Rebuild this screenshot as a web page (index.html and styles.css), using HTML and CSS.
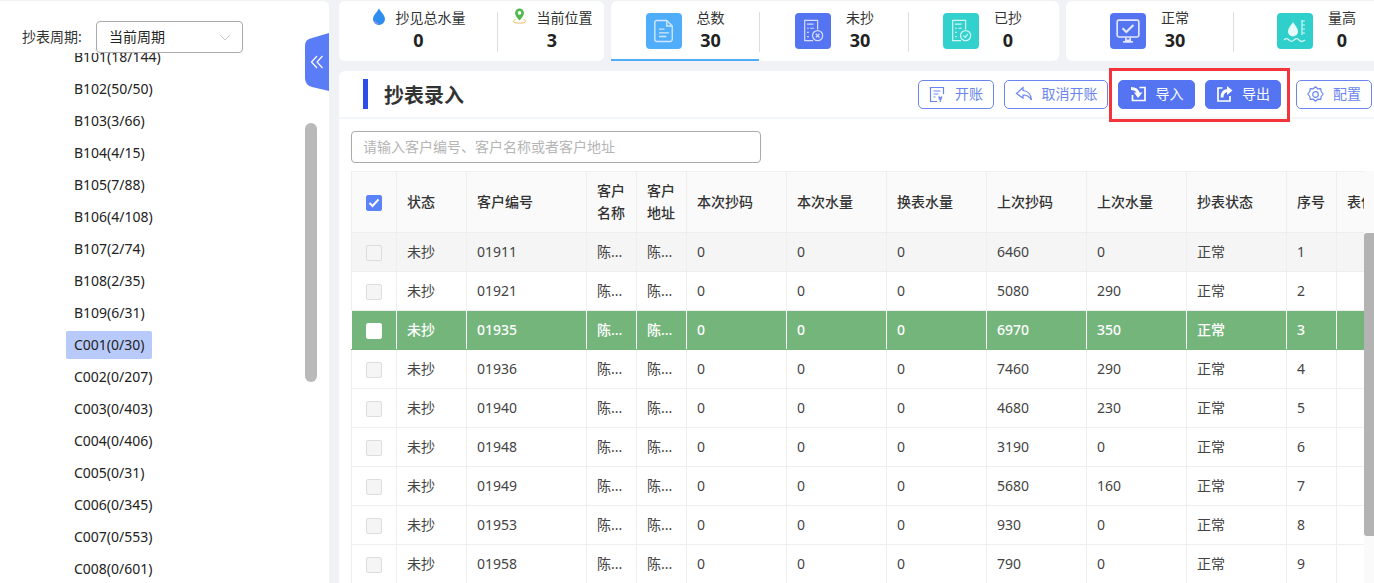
FILE: index.html
```html
<!DOCTYPE html>
<html lang="zh-CN">
<head>
    <meta charset="UTF-8">
    <meta name="viewport" content="width=device-width, initial-scale=1.0">
    <title>抄表录入</title>
    <link rel="stylesheet" href="styles.css">
</head>
<body>
    <aside class="sidebar">
        <div class="period">
            <span class="period-label">抄表周期:</span>
            <div class="period-select">
                <span class="period-value">当前周期</span>
                <svg class="chevron" width="12" height="7" viewBox="0 0 12 7"><path d="M1 1l5 5 5-5" fill="none" stroke="#c4c7cc"/></svg>
            </div>
        </div>
        <div class="tree">
            <ul class="tree-list">
                <li><span class="tree-item">B101(18/144)</span></li>
                <li><span class="tree-item">B102(50/50)</span></li>
                <li><span class="tree-item">B103(3/66)</span></li>
                <li><span class="tree-item">B104(4/15)</span></li>
                <li><span class="tree-item">B105(7/88)</span></li>
                <li><span class="tree-item">B106(4/108)</span></li>
                <li><span class="tree-item">B107(2/74)</span></li>
                <li><span class="tree-item">B108(2/35)</span></li>
                <li><span class="tree-item">B109(6/31)</span></li>
                <li><span class="tree-item active">C001(0/30)</span></li>
                <li><span class="tree-item">C002(0/207)</span></li>
                <li><span class="tree-item">C003(0/403)</span></li>
                <li><span class="tree-item">C004(0/406)</span></li>
                <li><span class="tree-item">C005(0/31)</span></li>
                <li><span class="tree-item">C006(0/345)</span></li>
                <li><span class="tree-item">C007(0/553)</span></li>
                <li><span class="tree-item">C008(0/601)</span></li>
            </ul>
        </div>
        <div class="tree-scroll"></div>
        <div class="collapse">
            <svg width="14" height="14" viewBox="0 0 14 14"><path d="M7 1L1.500 7 7 13M12.500 1L7 7l5.500 6" fill="none" stroke="#fff" stroke-width="1.200"/></svg>
        </div>
    </aside>

    <main class="main">
        <div class="stats">
            <div class="card card-a">
                <div class="mini mini-water">
                    <div class="mini-label">
                        <svg width="14" height="17" viewBox="0 0 14 17"><path d="M7 .5C5 4 1 7.500 1 11a6 6 0 0 0 12 0C13 7.500 9 4 7 .5z" fill="#2f8df0"/><path d="M2.500 13a5.500 5.500 0 0 0 4 3" fill="none" stroke="#a98cf0"/></svg>
                        <span>抄见总水量</span>
                    </div>
                    <b>0</b>
                </div>
                <div class="mini mini-place">
                    <div class="mini-label">
                        <svg width="15" height="16" viewBox="0 0 15 18"><path d="M7.500 .5a5 5 0 0 0-5 5c0 3.500 5 8.500 5 8.500s5-5 5-8.500a5 5 0 0 0-5-5z" fill="#52b94f"/><circle cx="7.500" cy="5.500" r="2" fill="#fff"/><path d="M3 13c-1.500.5-2.500 1.200-2.500 2 0 1.200 3 2 7 2s7-.8 7-2c0-.8-1-1.500-2.500-2" fill="none" stroke="#e0b34a"/></svg>
                        <span>当前位置</span>
                    </div>
                    <b>3</b>
                </div>
            </div>

            <div class="card card-b">
                <div class="stat selected">
                    <span class="stat-icon sky">
                        <svg width="22" height="24" viewBox="0 0 24 26" fill="none" stroke="#cfe8ff" stroke-width="1.500"><path d="M4 1.500h11l6 6V22a2.500 2.500 0 0 1-2.500 2.500h-14A2.500 2.500 0 0 1 2 22V3.500a2 2 0 0 1 2-2z"/><path d="M15 1.500v6h6M6.500 11h6M6.500 15h11M6.500 19h8"/></svg>
                    </span>
                    <div class="stat-text"><span>总数</span><b>30</b></div>
                </div>
                <div class="stat">
                    <span class="stat-icon indigo">
                        <svg width="24" height="24" viewBox="0 0 24 26" fill="none" stroke="#d5ddff" stroke-width="1.300"><path d="M12 23.500H3V1.500h14v10"/><path d="M5.500 5.500h7M5.500 10h2M9 10h4M5.500 14.500h2M5.500 19h2"/><circle cx="17" cy="18" r="5.500"/><path d="M15 16l4 4M19 16l-4 4"/></svg>
                    </span>
                    <div class="stat-text"><span>未抄</span><b>30</b></div>
                </div>
                <div class="stat">
                    <span class="stat-icon teal">
                        <svg width="24" height="24" viewBox="0 0 24 26" fill="none" stroke="#d3f6f4" stroke-width="1.300"><path d="M12 23.500H3V1.500h14v10"/><path d="M5.500 5.500h7M5.500 10h2M9 10h4M5.500 14.500h2M5.500 19h2"/><circle cx="17" cy="18" r="5.500"/><path d="M14.500 18l2 2 3-3.500"/></svg>
                    </span>
                    <div class="stat-text"><span>已抄</span><b>0</b></div>
                </div>
            </div>

            <div class="card card-c">
                <div class="stat">
                    <span class="stat-icon indigo">
                        <svg width="26" height="26" viewBox="0 0 24 24" fill="none" stroke="#e3e8ff" stroke-width="1.500"><rect x="2" y="2" width="20" height="15.500" rx="1.500"/><path d="M7 9.500l3.500 3.500L17 6.500" stroke-width="2"/><path d="M10 18v2.500h4V18M7.500 22h9" stroke-width="1.500"/></svg>
                    </span>
                    <div class="stat-text"><span>正常</span><b>30</b></div>
                </div>
                <div class="stat">
                    <span class="stat-icon teal2">
                        <svg width="26" height="26" viewBox="0 0 26 26" fill="none"><path d="M11 4c-2 3.500-5 6-5 9.500a5 5 0 0 0 10 0C16 10 13 7.500 11 4z" fill="#e6fbfa"/><path d="M20 2v15M20 3h3M20 7h3M20 11h3M20 15h3" stroke="#d3f6f4" stroke-width="1.200"/><path d="M2 22c2-2 3-2 5 0s3 2 5 0 3-2 5 0 3 2 6 0" stroke="#d3f6f4" stroke-width="1.300"/></svg>
                    </span>
                    <div class="stat-text"><span>量高</span><b>0</b></div>
                </div>
            </div>
        </div>

        <section class="panel">
            <header class="panel-head">
                <h1 class="title">抄表录入</h1>
                <div class="actions">
                    <button class="btn btn-open">
                        <svg width="17" height="17" viewBox="0 0 17 17" fill="none" stroke="#6a86ee" stroke-width="1.200"><path d="M8 15.500H1.500v-14h13V8"/><path d="M4.500 5h7M4.500 8h5M4.500 11h2M9.500 10.500l1.800 2 1.800-2M9.500 13h3.600M11.300 13v3"/></svg>
                        <span>开账</span>
                    </button>
                    <button class="btn btn-undo">
                        <svg width="18" height="16" viewBox="0 0 18 16" fill="none" stroke="#6a86ee" stroke-width="1.200"><path d="M8 1.500L1.500 7.500 8 12V9c3.500 0 6.500 1.500 8.500 5-.5-5-3.500-9-8.500-9.500z"/></svg>
                        <span>取消开账</span>
                    </button>
                    <button class="btn solid btn-in">
                        <svg width="17" height="16" viewBox="0 0 17 16" fill="none" stroke="#fff" stroke-width="1.700"><path d="M9.500 1.500h5.500v13H2.500V9"/><path d="M1 2.500c4.500 0 6.500 1.500 7.500 5" stroke-width="2.800"/><path d="M4 6.500h8.500L8 12z" fill="#fff" stroke="none"/></svg>
                        <span>导入</span>
                    </button>
                    <button class="btn solid btn-out">
                        <svg width="17" height="17" viewBox="0 0 17 17" fill="none" stroke="#fff" stroke-width="1.700"><path d="M6.500 2H2v13h12v-5"/><path d="M6 11.500c0-4.500 2.500-7 6.500-7" stroke-width="2.800"/><path d="M11 0L16.500 4.500 11 9z" fill="#fff" stroke="none"/></svg>
                        <span>导出</span>
                    </button>
                    <button class="btn btn-conf">
                        <svg width="17" height="17" viewBox="0 0 17 17" fill="none" stroke="#6a86ee" stroke-width="1.200" stroke-linejoin="round"><path d="M8.500 .8l2.200 2 3-.2.500 2.900 2 2.500-2 2.500-.5 2.900-3-.2-2.200 2-2.200-2-3 .2-.5-2.900-2-2.500 2-2.500.5-2.900 3 .2z"/><circle cx="8.500" cy="8.500" r="2.800"/></svg>
                        <span>配置</span>
                    </button>
                </div>
            </header>
            <div class="annotation"></div>

            <div class="search">请输入客户编号、客户名称或者客户地址</div>

            <div class="table-box">
                <div class="table-clip">
                    <table class="grid">
                        <colgroup>
                            <col class="c-check"><col class="c-state"><col class="c-no"><col class="c-short"><col class="c-short">
                            <col class="c-num"><col class="c-num"><col class="c-num"><col class="c-num"><col class="c-num"><col class="c-num">
                            <col class="c-short"><col class="c-num">
                        </colgroup>
                        <thead>
                            <tr>
                                <th><span class="check on"><svg width="12" height="10" viewBox="0 0 12 10"><path d="M1.500 5l3 3 6-6.500" fill="none" stroke="#fff" stroke-width="2"/></svg></span></th>
                                <th>状态</th><th>客户编号</th><th>客户<br>名称</th><th>客户<br>地址</th>
                                <th>本次抄码</th><th>本次水量</th><th>换表水量</th><th>上次抄码</th><th>上次水量</th><th>抄表状态</th><th>序号</th><th>表位</th>
                            </tr>
                        </thead>
                        <tbody>
                            <tr class="hover"><td><span class="check"></span></td><td>未抄</td><td>01911</td><td>陈...</td><td>陈...</td><td>0</td><td>0</td><td>0</td><td>6460</td><td>0</td><td>正常</td><td>1</td><td></td></tr>
                            <tr><td><span class="check"></span></td><td>未抄</td><td>01921</td><td>陈...</td><td>陈...</td><td>0</td><td>0</td><td>0</td><td>5080</td><td>290</td><td>正常</td><td>2</td><td></td></tr>
                            <tr class="current"><td><span class="check"></span></td><td>未抄</td><td>01935</td><td>陈...</td><td>陈...</td><td>0</td><td>0</td><td>0</td><td>6970</td><td>350</td><td>正常</td><td>3</td><td></td></tr>
                            <tr><td><span class="check"></span></td><td>未抄</td><td>01936</td><td>陈...</td><td>陈...</td><td>0</td><td>0</td><td>0</td><td>7460</td><td>290</td><td>正常</td><td>4</td><td></td></tr>
                            <tr><td><span class="check"></span></td><td>未抄</td><td>01940</td><td>陈...</td><td>陈...</td><td>0</td><td>0</td><td>0</td><td>4680</td><td>230</td><td>正常</td><td>5</td><td></td></tr>
                            <tr><td><span class="check"></span></td><td>未抄</td><td>01948</td><td>陈...</td><td>陈...</td><td>0</td><td>0</td><td>0</td><td>3190</td><td>0</td><td>正常</td><td>6</td><td></td></tr>
                            <tr><td><span class="check"></span></td><td>未抄</td><td>01949</td><td>陈...</td><td>陈...</td><td>0</td><td>0</td><td>0</td><td>5680</td><td>160</td><td>正常</td><td>7</td><td></td></tr>
                            <tr><td><span class="check"></span></td><td>未抄</td><td>01953</td><td>陈...</td><td>陈...</td><td>0</td><td>0</td><td>0</td><td>930</td><td>0</td><td>正常</td><td>8</td><td></td></tr>
                            <tr><td><span class="check"></span></td><td>未抄</td><td>01958</td><td>陈...</td><td>陈...</td><td>0</td><td>0</td><td>0</td><td>790</td><td>0</td><td>正常</td><td>9</td><td></td></tr>
                        </tbody>
                    </table>
                </div>
                <div class="table-scroll"><div class="thumb"></div></div>
            </div>
        </section>
    </main>
</body>
</html>
```

FILE: styles.css
```css
html, body {
    height: 100%;
}

body {
    margin: 0;
    height: 583px;
    overflow: hidden;
    display: flex;
    gap: 10px;
    padding-top: 1px;
    box-sizing: border-box;
    background: #f0f2f5;
    color: #333;
    font-family: "Noto Sans", "Noto Sans CJK SC", sans-serif;
    font-size: 14px;
}

/* left tree */
.sidebar {
    position: relative;
    flex: 0 0 329px;
    background: white;
    border-radius: 0 6px 0 0;
    display: flex;
    flex-direction: column;
    overflow: hidden;
}

.period {
    flex: 0 0 51px;
    display: flex;
    align-items: flex-start;
    padding: 20px 0 0 22px;
    box-sizing: border-box;
}

.period-label {
    width: 74px;
    font-size: 14px;
    line-height: 32px;
    white-space: nowrap;
}

.period-select {
    width: 147px;
    height: 32px;
    box-sizing: border-box;
    border: 1px solid #aaa;
    border-radius: 4px;
    padding: 0 11px 0 12px;
    display: flex;
    align-items: center;
    justify-content: space-between;
    color: #222;
}

.period-value {
    margin-top: -2px;
}

.tree {
    flex: 1;
    overflow: hidden;
}

.tree-list {
    list-style: none;
    margin: -12px 0 0;
    padding: 0 0 0 66px;
}

.tree-list li {
    height: 32px;
    display: flex;
    align-items: center;
}

.tree-item {
    padding: 0 7px 0 8px;
    line-height: 28px;
    color: #222;
    white-space: nowrap;
}

.tree-item.active {
    background: #b8cafa;
    border-radius: 2px;
}

.tree-scroll {
    position: absolute;
    left: 305px;
    top: 122px;
    width: 12px;
    height: 259px;
    border-radius: 6px;
    background: #b9b9b9;
}

.collapse {
    position: absolute;
    right: 0;
    top: 32px;
    width: 24px;
    height: 58px;
    background: #5b7cf7;
    clip-path: path("M0 13 Q0 6 7 5 L24 0 V58 L7 54 Q0 52 0 45 Z");
    display: flex;
    align-items: center;
    justify-content: center;
}

/* right side */
.main {
    flex: 1;
    min-width: 0;
    display: flex;
    flex-direction: column;
    gap: 10px;
}

.stats {
    display: flex;
    gap: 7px;
    height: 60px;
    flex: none;
}

.card {
    background: white;
    border-radius: 6px;
    display: flex;
    flex: none;
}

.card-a { width: 265px; }
.card-b { width: 448px; }
.card-c { width: 334px; }

.mini {
    display: flex;
    flex-direction: column;
    align-items: center;
    position: relative;
    padding-top: 7px;
    box-sizing: border-box;
}

.mini-water { width: 159px; }
.mini-place { width: 106px; padding-left: 2px; }

.mini-label {
    display: flex;
    align-items: center;
    gap: 10px;
    height: 18px;
    margin-bottom: 2px;
    white-space: nowrap;
    font-size: 14px;
}

.mini-label svg {
    margin-top: -2px;
}

.mini b,
.stat-text b {
    font-size: 18px;
    line-height: 24px;
    color: #222;
}

.mini-water::after,
.stat + .stat::before {
    content: "";
    position: absolute;
    top: 11px;
    height: 40px;
    width: 1px;
    background: #ddd;
}

.mini-water::after { right: 0; }
.stat + .stat::before { left: 0; }

.stat {
    position: relative;
    flex: 1;
    box-sizing: border-box;
    display: flex;
    align-items: center;
    justify-content: center;
    gap: 15px;
}

.card-b .stat {
    flex: 0 0 149px;
}

.card-b .stat:nth-child(2) {
    padding-left: 2px;
}

.card-b .stat.selected {
    flex-basis: 148px;
    border-radius: 6px 6px 0 0;
    box-shadow: inset 0 -2px 0 #4facf6;
}

.stat-icon {
    width: 36px;
    height: 36px;
    border-radius: 4px;
    display: flex;
    align-items: center;
    justify-content: center;
}

.sky { background: #50adfa; }
.indigo { background: #5574f2; }
.teal { background: #33d1cd; }
.teal2 { background: #2fcfcb; }

.stat-text {
    display: flex;
    flex-direction: column;
    align-items: center;
    min-width: 28px;
    margin-top: -2px;
}

.stat-text span {
    line-height: 20px;
    font-size: 14px;
}

/* panel */
.panel {
    position: relative;
    flex: 1;
    background: white;
    border-radius: 6px 0 0 0;
    min-height: 0;
}

.panel-head {
    height: 46px;
    border-bottom: 2px solid #f2f5fa;
    display: flex;
    align-items: center;
    justify-content: space-between;
    padding-left: 24px;
}

.title {
    margin: 0;
    height: 30px;
    border-left: 5px solid #2b4ee8;
    padding-left: 16px;
    font-size: 20px;
    line-height: 34px;
    font-weight: bold;
}

.actions {
    display: flex;
    align-items: center;
    margin-right: 2px;
}

.btn {
    height: 29px;
    box-sizing: border-box;
    border: 1px solid #6a86ee;
    border-radius: 5px;
    background: white;
    color: #6a86ee;
    font: inherit;
    font-size: 14px;
    padding: 0;
    display: flex;
    align-items: center;
    justify-content: center;
    gap: 9px;
}

.btn span {
    margin-top: -2px;
}

.btn.solid {
    background: #5574f2;
    border-color: #5574f2;
    color: white;
}

.btn-open { width: 76px; margin-right: 10px; }
.btn-undo { width: 104px; margin-right: 10px; }
.btn-in { width: 77px; margin-right: 10px; }
.btn-out { width: 76px; margin-right: 15px; }
.btn-conf { width: 76px; }

.annotation {
    position: absolute;
    left: 770px;
    top: -3px;
    width: 181px;
    height: 54px;
    box-sizing: border-box;
    border: 3px solid #f5333a;
}

.search {
    margin: 12px 0 8px 12px;
    width: 410px;
    height: 32px;
    box-sizing: border-box;
    border: 1px solid #aaa;
    border-radius: 4px;
    padding-left: 11px;
    line-height: 30px;
    font-size: 14px;
    color: #b5b5b5;
}

.table-box {
    display: flex;
    margin-left: 12px;
}

.table-clip {
    width: 1013px;
    overflow: hidden;
    flex: none;
}

.grid {
    table-layout: fixed;
    border-collapse: collapse;
    width: 1085px;
}

.c-check { width: 45px; }
.c-state { width: 70px; }
.c-no { width: 120px; }
.c-short { width: 50px; }
.c-num { width: 100px; }

.grid th,
.grid td {
    border: 1px solid #eee;
    padding: 0 0 0 10px;
    text-align: left;
    white-space: nowrap;
    overflow: hidden;
}

.grid th:first-child {
    padding: 0;
    text-align: center;
}

.grid td:first-child {
    padding: 0 0 2px;
    text-align: center;
}

.grid th {
    height: 60px;
    background: #fafafa;
    font-weight: 500;
    font-size: 14px;
    line-height: 22px;
    color: #333;
}

.grid td {
    height: 36px;
    padding-bottom: 2px;
    color: #444;
}

.grid tr.hover td {
    background: #f5f5f5;
}

.grid tr.current td {
    background: #74b57c;
    color: white;
    font-weight: 500;
    border-color: #fff;
    border-top-color: #74b57c;
    border-bottom-color: #74b57c;
}

.check {
    display: inline-flex;
    align-items: center;
    justify-content: center;
    width: 16px;
    height: 16px;
    box-sizing: border-box;
    border: 1px solid #ddd;
    border-radius: 2px;
    background: #f5f5f5;
    vertical-align: middle;
}

.check.on {
    background: #5b83fb;
    border-color: #5b83fb;
}

.current .check {
    background: white;
    border-color: white;
}

.table-scroll {
    flex: none;
    width: 10px;
    padding-top: 62px;
    background: #fafafa;
}

.thumb {
    height: 303px;
    background: #b3b3b3;
    border-radius: 3px 0 0 3px;
}
```
